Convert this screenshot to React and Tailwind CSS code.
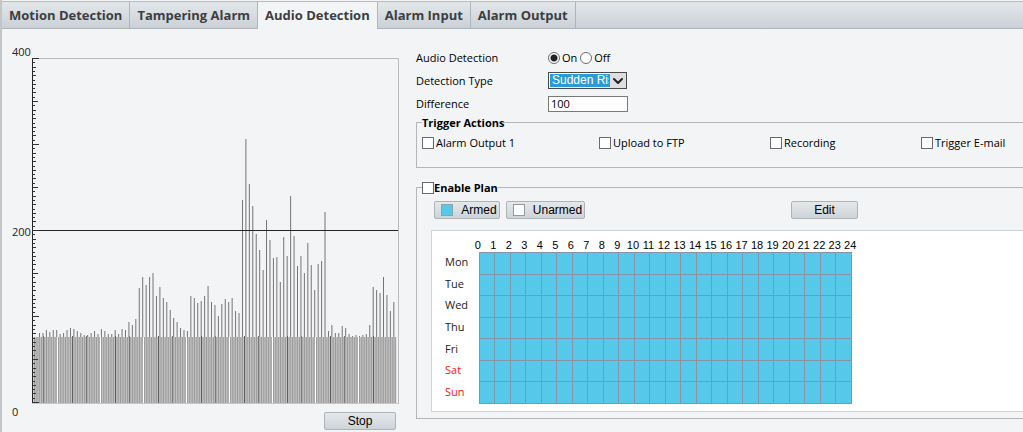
import React, { useState } from "react";
import { ChevronDown } from "lucide-react";

const TABS = [
  "Motion Detection",
  "Tampering Alarm",
  "Audio Detection",
  "Alarm Input",
  "Alarm Output",
];

const ACTIONS = ["Alarm Output 1", "Upload to FTP", "Recording", "Trigger E-mail"];

const DAYS = ["Mon", "Tue", "Wed", "Thu", "Fri", "Sat", "Sun"];
const HOURS = Array.from({ length: 25 }, (_, i) => i);

// bar heights above the base line, newest sample last
const SAMPLES = [
  70, 70, 73, 71, 73, 73, 69, 70, 73, 75, 74, 72, 70, 68, 68, 70, 72, 69, 74,
  72, 69, 69, 73, 69, 74, 73, 81, 78, 84, 115, 126, 118, 126, 130, 107, 116,
  105, 101, 93, 85, 81, 75, 73, 72, 107, 105, 100, 102, 107, 117, 101, 98, 87,
  99, 104, 101, 105, 92, 90, 203, 264, 219, 197, 169, 153, 133, 183, 163, 145,
  146, 121, 166, 147, 207, 167, 137, 147, 130, 160, 138, 113, 139, 142, 191,
  72, 78, 70, 70, 77, 75, 69, 67, 68, 67, 68, 69, 78, 116, 113, 110, 126, 108,
  92, 101,
];

const BASE_Y = 345;
const STEP = 3.44;

function AudioChart() {
  return (
    <svg width="367" height="347" viewBox="0 0 367 347" className="block" role="img" aria-label="Audio level">
      <path d="M0 0.5H366.5V346" fill="none" stroke="#b9bcbf" />
      <rect x="1" y="279" width="363" height="66" fill="#cdcdcd" />
      {Array.from({ length: 211 }, (_, i) => (
        <rect key={i} x={2 + i * (STEP / 2)} y="279" width="1" height="66" fill="#9a9a9a" />
      ))}
      {SAMPLES.map((v, i) => (
        <rect key={i} x={7 + i * STEP} y={BASE_Y - v} width="1" height={v - 66} fill="#757575" />
      ))}
      {Array.from({ length: 8 }, (_, i) => (
        <g key={i}>
          <rect x={25 + i * 43} y="279" width="1" height="66" fill="#ffffff" />
          <rect x={40 + i * 43} y="278" width="1" height="67" fill="#606060" />
          <rect x={11 + i * 43} y="278" width="1" height="67" fill="#7c7c7c" />
        </g>
      ))}
      <path d="M0 345.5H366" stroke="#c4c6c8" />
      <path d="M0 172.5H366" stroke="#222528" />
      <path d="M0.5 0V345" stroke="#222" />
      {Array.from({ length: 81 }, (_, i) => {
        const y = Math.round(i * 4.3) + 0.5;
        const len = i % 20 === 0 ? 7 : i % 10 === 0 ? 6 : i % 2 === 0 ? 4 : 3;
        return <path key={i} d={`M0 ${y}H${len}`} stroke="#333" />;
      })}
    </svg>
  );
}

function Check({ label, bold }) {
  const [on, setOn] = useState(false);
  return (
    <label className={bold ? "flex items-center font-bold" : "flex items-center gap-[2px]"}>
      <input
        type="checkbox"
        checked={on}
        onChange={(e) => setOn(e.target.checked)}
        className="size-3 shrink-0 appearance-none border border-[#6b6b6b] bg-white checked:bg-[#56c8ea]"
      />
      {label}
    </label>
  );
}

function Radio({ label, checked, onChange }) {
  return (
    <label className="flex items-center gap-[2px]">
      <input
        type="radio"
        name="audio-detection"
        checked={checked}
        onChange={onChange}
        className="size-3 shrink-0 appearance-none rounded-full border border-[#6b6b6b] bg-white checked:bg-[radial-gradient(circle,#222_0_3px,#fff_4px)]"
      />
      {label}
    </label>
  );
}

function Button({ className = "", children }) {
  return (
    <button
      type="button"
      className={`flex h-[18px] items-center justify-center rounded-xs border border-[#aeb3b8] bg-linear-to-b from-[#e4e8eb] to-[#cdd4d9] font-['Liberation_Sans',sans-serif] text-[12px] leading-none ${className}`}
    >
      {children}
    </button>
  );
}

export default function App() {
  const [tab, setTab] = useState("Audio Detection");
  const [enabled, setEnabled] = useState(true);
  const [type, setType] = useState("Sudden Rise");
  const [difference, setDifference] = useState("100");

  return (
    <div className="min-h-screen overflow-hidden border-l-2 border-[#c3c6c9] bg-[#f3f4f6] pt-px font-['Open_Sans','Noto_Sans',sans-serif] text-[11px] leading-[15px] text-black">
      {/* Tabs */}
      <nav className="flex h-7 border-t border-[#b5babe] bg-linear-to-b from-[#e3e7ea] to-[#c9d0d6] text-[13px] font-bold text-[#3c3e41]">
        {TABS.map((name) => (
          <button
            key={name}
            type="button"
            onClick={() => setTab(name)}
            className={
              name === tab
                ? "border-r border-[#b0b5ba] bg-[#f3f4f6] px-[7px]"
                : "border-r border-b border-[#b0b5ba] px-[7px]"
            }
          >
            {name}
          </button>
        ))}
        <div className="flex-1 border-b border-[#b0b5ba]" />
      </nav>

      <main className="flex gap-[17px]">
        {/* Live level */}
        <section className="flex shrink-0 pt-[15px] pl-[10px]">
          <div className="flex h-[375px] w-5 flex-col justify-between text-[#222]">
            <span>400</span>
            <span>200</span>
            <span>0</span>
          </div>
          <div className="flex flex-col items-end gap-[7px] pt-[14px]">
            <AudioChart />
            <Button className="mr-[3px] w-[72px]">Stop</Button>
          </div>
        </section>

        {/* Settings */}
        <section className="min-w-0 flex-1 pt-[17px]">
          <div className="grid auto-rows-[23px] grid-cols-[132px_1fr] items-center">
            <span>Audio Detection</span>
            <div className="flex items-center gap-[3px]">
              <Radio label="On" checked={enabled} onChange={() => setEnabled(true)} />
              <Radio label="Off" checked={!enabled} onChange={() => setEnabled(false)} />
            </div>

            <label htmlFor="type">Detection Type</label>
            <div className="relative flex h-[17px] w-[79px] border border-[#4a4a4a] bg-white p-px">
              <select
                id="type"
                value={type}
                onChange={(e) => setType(e.target.value)}
                className="w-full appearance-none overflow-hidden bg-[#2a9bd6] pr-4 pl-[2px] font-['Liberation_Sans',sans-serif] text-[12px] leading-[13px] text-white outline-none"
              >
                <option>Sudden Rise</option>
                <option>Sudden Fall</option>
              </select>
              <span className="pointer-events-none absolute inset-y-0 right-0 flex w-4 items-center justify-center bg-[#dedede] text-[#222]">
                <ChevronDown size={16} strokeWidth={3} />
              </span>
            </div>

            <label htmlFor="difference">Difference</label>
            <input
              id="difference"
              value={difference}
              onChange={(e) => setDifference(e.target.value)}
              className="h-4 w-20 border border-[#7a7a7a] bg-white px-[2px] outline-none"
            />
          </div>

          <fieldset className="h-[53px] min-w-0 border border-r-0 border-[#b4b7ba] pl-[5px]">
            <legend className="font-bold">Trigger Actions</legend>
            <div className="grid grid-cols-[177px_171px_151px_1fr] pt-[5px]">
              {ACTIONS.map((a) => (
                <Check key={a} label={a} />
              ))}
            </div>
          </fieldset>

          <fieldset className="mt-3 min-w-0 border border-r-0 border-[#b4b7ba] pb-[6px] pl-[5px]">
            <legend>
              <Check label="Enable Plan" bold />
            </legend>
            <div className="flex items-center gap-[6px] pt-[6px] pl-3">
              <Button className="w-[66px] gap-2 pl-1">
                <span className="size-3 border border-[#8fa3ab] bg-[#56c8ea]" />
                Armed
              </Button>
              <Button className="w-[79px] gap-2 pl-1">
                <span className="size-3 border border-[#999] bg-white" />
                Unarmed
              </Button>
              <div className="flex w-[267px] justify-end">
                <Button className="w-[67px]">Edit</Button>
              </div>
            </div>

            {/* Weekly plan */}
            <div className="mt-[11px] ml-[9px] border border-r-0 border-[#cfd4d8] bg-white py-[7px] pl-[13px]">
              <div className="ml-[25px] grid w-[388px] grid-cols-25 text-center font-['Liberation_Sans',sans-serif] text-[11px] leading-[14px] text-black">
                {HOURS.map((h) => (
                  <span key={h}>{h}</span>
                ))}
              </div>
              <table className="h-[152px] w-[407px] table-fixed border-collapse">
                <tbody>
                  {DAYS.map((d, i) => (
                    <tr key={d}>
                      <th
                        scope="row"
                        className={
                          i > 4
                            ? "w-[34px] p-0 pb-[3px] text-left font-normal text-[#ff1010]"
                            : "w-[34px] p-0 pb-[3px] text-left font-normal text-[#222]"
                        }
                      >
                        {d}
                      </th>
                      {HOURS.slice(1).map((h) => (
                        <td key={h} className="border border-[#8793a8] bg-[#56c8ea] p-0" />
                      ))}
                    </tr>
                  ))}
                </tbody>
              </table>
            </div>
          </fieldset>
        </section>
      </main>
    </div>
  );
}
